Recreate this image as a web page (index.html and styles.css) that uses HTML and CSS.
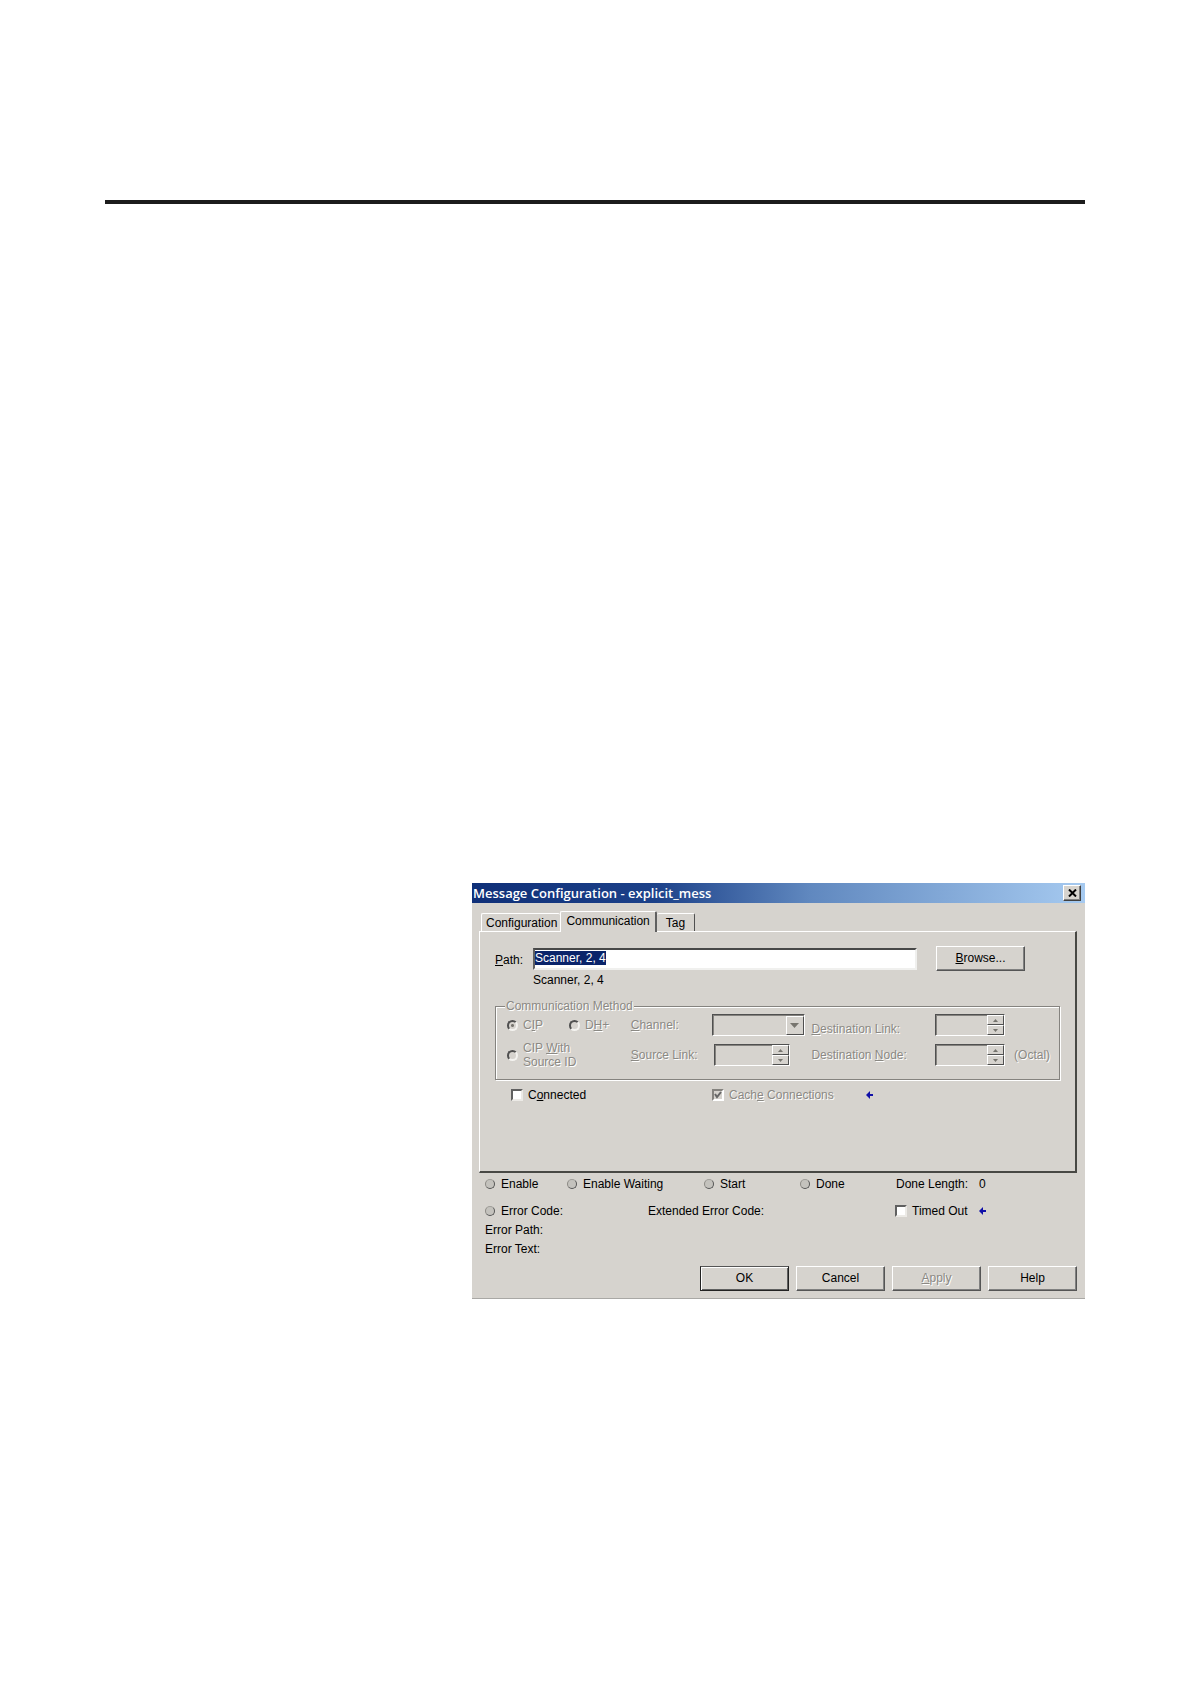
FILE: index.html
```html
<!DOCTYPE html>
<html lang="en">
<head>
  <meta charset="UTF-8">
  <meta name="viewport" content="width=device-width, initial-scale=1.0">
  <title>Message Configuration - explicit_mess</title>
  <link rel="stylesheet" href="styles.css">
</head>
<body>
  <main class="page">
    <hr class="page-rule">

    <form class="dialog" onsubmit="return false">
      <header class="title-bar">
        <h1>Message Configuration - explicit_mess</h1>
        <button type="button" class="close" aria-label="Close">
          <svg width="9" height="8" viewBox="0 0 9 8"><path d="M1 0.5 L8 7.5 M8 0.5 L1 7.5" stroke="#000" stroke-width="2"/></svg>
        </button>
      </header>

      <div class="dialog-body">
        <nav class="tabs">
          <button type="button" class="tab">Configuration</button>
          <button type="button" class="tab active">Communication</button>
          <button type="button" class="tab tab-tag">Tag</button>
        </nav>

        <section class="panel">
          <div class="path-row">
            <label for="path"><u>P</u>ath:</label>
            <div class="path-box">
              <input type="text" id="path" value="Scanner, 2, 4">
            </div>
            <button type="button" class="btn"><span><u>B</u>rowse...</span></button>
          </div>
          <p class="path-text">Scanner, 2, 4</p>

          <fieldset class="method" disabled>
            <legend>Communication Method</legend>
            <div class="method-row">
              <label class="choice"><input type="radio" name="method" checked><span>C<u>I</u>P</span></label>
              <label class="choice"><input type="radio" name="method"><span>D<u>H</u>+</span></label>
              <label for="channel"><u>C</u>hannel:</label>
              <div class="combo">
                <select id="channel"><option></option></select>
                <span class="combo-arrow"><svg width="9" height="5" viewBox="0 0 9 5"><path d="M0 0H9L4.500 5Z" fill="#77756f"/></svg></span>
              </div>
              <label for="destLink" class="low"><u>D</u>estination Link:</label>
              <div class="spinner">
                <input type="text" id="destLink">
                <div class="spin-buttons">
                  <button type="button" aria-label="Increase link"><svg width="5" height="3" viewBox="0 0 5 3"><path d="M0 3L2.500 0L5 3Z" fill="#77756f"/></svg></button>
                  <button type="button" aria-label="Decrease link"><svg width="5" height="3" viewBox="0 0 5 3"><path d="M0 0H5L2.500 3Z" fill="#77756f"/></svg></button>
                </div>
              </div>
            </div>
            <div class="method-row second">
              <label class="choice wide"><input type="radio" name="method"><span>CIP <u>W</u>ith<br>Source ID</span></label>
              <label for="sourceLink"><u>S</u>ource Link:</label>
              <div class="spinner source">
                <input type="text" id="sourceLink">
                <div class="spin-buttons">
                  <button type="button" aria-label="Increase source"><svg width="5" height="3" viewBox="0 0 5 3"><path d="M0 3L2.500 0L5 3Z" fill="#77756f"/></svg></button>
                  <button type="button" aria-label="Decrease source"><svg width="5" height="3" viewBox="0 0 5 3"><path d="M0 0H5L2.500 3Z" fill="#77756f"/></svg></button>
                </div>
              </div>
              <label for="destNode">Destination <u>N</u>ode:</label>
              <div class="spinner">
                <input type="text" id="destNode">
                <div class="spin-buttons">
                  <button type="button" aria-label="Increase node"><svg width="5" height="3" viewBox="0 0 5 3"><path d="M0 3L2.500 0L5 3Z" fill="#77756f"/></svg></button>
                  <button type="button" aria-label="Decrease node"><svg width="5" height="3" viewBox="0 0 5 3"><path d="M0 0H5L2.500 3Z" fill="#77756f"/></svg></button>
                </div>
              </div>
              <span>(Octal)</span>
            </div>
          </fieldset>

          <div class="connect-row">
            <label class="choice"><input type="checkbox"><span>C<u>o</u>nnected</span></label>
            <label class="choice off"><input type="checkbox" checked disabled><span>Cach<u>e</u> Connections</span></label>
            <svg class="arrow" width="8" height="8" viewBox="0 0 8 8"><path d="M0 4L4 0V3H7V5H4V8Z" fill="#1010a8"/></svg>
          </div>
        </section>

        <div class="status-row">
          <span class="status"><i class="led"></i>Enable</span>
          <span class="status"><i class="led"></i>Enable Waiting</span>
          <span class="status"><i class="led"></i>Start</span>
          <span class="status"><i class="led"></i>Done</span>
          <span class="length">Done Length:<output>0</output></span>
        </div>
        <div class="error-row">
          <span class="status"><i class="led"></i>Error Code:</span>
          <span>Extended Error Code:</span>
          <div class="timed">
            <label class="choice"><input type="checkbox"><span>Timed Out</span></label>
            <svg class="arrow" width="8" height="8" viewBox="0 0 8 8"><path d="M0 4L4 0V3H7V5H4V8Z" fill="#1010a8"/></svg>
          </div>
        </div>
        <p class="error-line">Error Path:</p>
        <p class="error-line">Error Text:</p>

        <footer class="actions">
          <button type="submit" class="btn default">OK</button>
          <button type="button" class="btn">Cancel</button>
          <button type="button" class="btn" disabled><span><u>A</u>pply</span></button>
          <button type="button" class="btn">Help</button>
        </footer>
      </div>
    </form>
  </main>

  <script>
    // Start with the path selected, ready to be replaced
    var path = document.getElementById('path');
    path.focus({ preventScroll: true });
    path.select();
  </script>
</body>
</html>
```
FILE: styles.css
```css
* {
  box-sizing: border-box;
}

body {
  margin: 0;
  background: #fff;
  color: #000;
  font-family: "Liberation Sans", Arial, sans-serif;
  font-size: 12px;
  line-height: 14px;
}

button, input, select {
  font: inherit;
  color: inherit;
  margin: 0;
}

p {
  margin: 0;
}

.page {
  padding: 200px 105px;
}

.page-rule {
  height: 4px;
  margin: 0;
  border: none;
  background: #1c1c1c;
}

.dialog {
  margin: 679px 0 0 367px;
  background: #d6d3ce;
  border-bottom: 1px solid #a9a8a5;
}

.title-bar {
  display: flex;
  align-items: center;
  justify-content: space-between;
  height: 20px;
  padding: 0 4px 0 1px;
  background: linear-gradient(to right, #0f2f78, #1c4189 30%, #6088bf 55%, #a6caf0);
}

.title-bar h1 {
  margin: 0;
  color: #fff;
  font-family: "Open Sans", Tahoma, sans-serif;
  font-size: 13px;
  font-weight: 600;
  line-height: 20px;
}

.close {
  display: flex;
  align-items: center;
  justify-content: center;
  width: 18px;
  height: 16px;
  padding: 0;
  background: #d6d3ce;
  border: 1px solid;
  border-color: #fff #404040 #404040 #fff;
  box-shadow: inset -1px -1px 0 #808080;
}

.dialog-body {
  padding: 8px 8px 7px 7px;
}

/* Tabs */
.tabs {
  display: flex;
  align-items: flex-end;
  padding-left: 2px;
}

.tab {
  height: 18px;
  padding: 0 3px 0 4px;
  background: #d6d3ce;
  border: 1px solid #fff;
  border-width: 1px 0 0 1px;
  border-radius: 2px 2px 0 0;
}

.tab.active {
  height: 21px;
  margin-bottom: -1px;
  padding: 0 5px 2px;
  border-right: 2px solid #606060;
  z-index: 1;
}

.tab-tag {
  padding: 0 9px;
  border-left: none;
  border-right: 1px solid #505050;
}

.panel {
  min-height: 242px;
  padding: 14px 15px 0 15px;
  border: 1px solid #fff;
  border-right: 2px solid #484844;
  border-bottom: 2px solid #484844;
}

.path-row {
  display: flex;
  align-items: center;
}

.path-row label {
  width: 38px;
  flex: none;
  padding-top: 3px;
}

.path-box {
  flex: 1;
  height: 22px;
  margin-right: 19px;
  padding: 0;
  background: #fff;
  border: 2px solid;
  border-color: #484848 #f0f0ee #f0f0ee #606060;
}

.path-box input {
  display: block;
  width: 100%;
  height: 16px;
  padding: 0;
  border: none;
  outline: none;
}

.path-box input::selection {
  background: #0a246a;
  color: #fff;
}

.path-row .btn {
  margin-right: 35px;
}

.btn {
  width: 89px;
  height: 25px;
  padding: 0 0 1px;
  background: #d6d3ce;
  border: 1px solid;
  border-color: #fff #555 #555 #fff;
  box-shadow: inset -1px -1px 0 #808080;
}

.btn.default {
  border-color: #555 #222 #222 #222;
  box-shadow: inset 1px 1px 0 #fff, inset -1px -1px 0 #606060;
}

.btn:disabled,
.method,
.off {
  color: #8b8984;
  text-shadow: 1px 1px 0 #fff;
}

.path-text {
  padding: 2px 0 0 38px;
}

/* Communication method */
.method {
  min-width: 0;
  margin: 12px 0 0;
  padding: 1px 0 10px 11px;
  border: 1px solid #85837f;
  box-shadow: 1px 1px 0 #fff, inset 1px 1px 0 #fff;
}

.method legend {
  margin-left: -2px;
  padding: 0 1px;
  background: #d6d3ce;
}

.method-row {
  display: grid;
  grid-template-columns: 62fr 62fr 81fr 100fr 124fr 79fr 45fr;
  align-items: center;
  height: 22px;
}

.method-row.second {
  height: 28px;
  margin-top: 5px;
}

.low {
  align-self: end;
}

.choice {
  display: flex;
  align-items: center;
  gap: 5px;
}

.wide {
  grid-column: span 2;
}

.choice input {
  appearance: none;
  flex: none;
  width: 11px;
  height: 11px;
}

.choice input[type="radio"] {
  border: 2px solid;
  border-color: #505050 #f4f3f0 #f4f3f0 #505050;
  border-radius: 50%;
}

.choice input[type="radio"]:checked {
  background: radial-gradient(circle, #77756f 0 1px, transparent 2px);
}

.choice input[type="checkbox"] {
  width: 12px;
  height: 12px;
  background: #fff;
  border: 2px solid;
  border-color: #606060 #eceae6 #eceae6 #606060;
}

.choice input[type="checkbox"]:disabled {
  border-color: #85837f #fff #fff #85837f;
  background: #d6d3ce url("data:image/svg+xml,%3Csvg xmlns='http://www.w3.org/2000/svg' viewBox='0 0 8 8'%3E%3Cpath d='M1 3L3 6L7 1' fill='none' stroke='%23666' stroke-width='2'/%3E%3C/svg%3E") center / 8px 8px no-repeat;
}

.combo,
.spinner {
  display: flex;
  width: 70px;
  height: 22px;
  border: 1px solid;
  border-color: #505050 #fff #fff #505050;
  box-shadow: inset 1px 1px 0 #85837f;
}

.combo {
  width: 93px;
}

.source {
  width: 76px;
  margin-left: 2px;
}

.combo select,
.spinner input {
  appearance: none;
  flex: 1;
  min-width: 0;
  padding: 0 2px;
  background: transparent;
  border: none;
}

.combo-arrow {
  display: flex;
  align-items: center;
  justify-content: center;
  width: 18px;
  margin-top: 1px;
  border: 1px solid;
  border-color: #fff #505050 #505050 #fff;
}

.spin-buttons {
  display: flex;
  flex-direction: column;
  width: 17px;
}

.spin-buttons button {
  display: flex;
  align-items: center;
  justify-content: center;
  flex: 1;
  padding: 0;
  background: #d6d3ce;
  border: 1px solid;
  border-color: #fff #505050 #505050 #fff;
}

.connect-row {
  display: grid;
  grid-template-columns: 201fr 154fr 194fr;
  align-items: center;
  padding: 8px 0 0 16px;
}

.arrow {
  display: block;
}

/* Status area below the tabs */
.status-row,
.error-row {
  display: grid;
  grid-template-columns: 82fr 137fr 96fr 96fr 181fr;
  align-items: center;
  padding: 4px 0 0 6px;
}

.error-row {
  grid-template-columns: 163fr 247fr 182fr;
  padding-top: 13px;
}

.status {
  display: flex;
  align-items: center;
  gap: 6px;
}

.led {
  width: 10px;
  height: 10px;
  background: #c4c2bd;
  border: 1px solid;
  border-color: #a09e99 #555 #555 #8b8984;
  border-radius: 50%;
}

.length,
.timed {
  display: flex;
  align-items: center;
  gap: 11px;
}

.error-line {
  padding: 5px 0 0 6px;
}

.actions {
  display: flex;
  justify-content: flex-end;
  gap: 7px;
  margin-top: 10px;
}
```
